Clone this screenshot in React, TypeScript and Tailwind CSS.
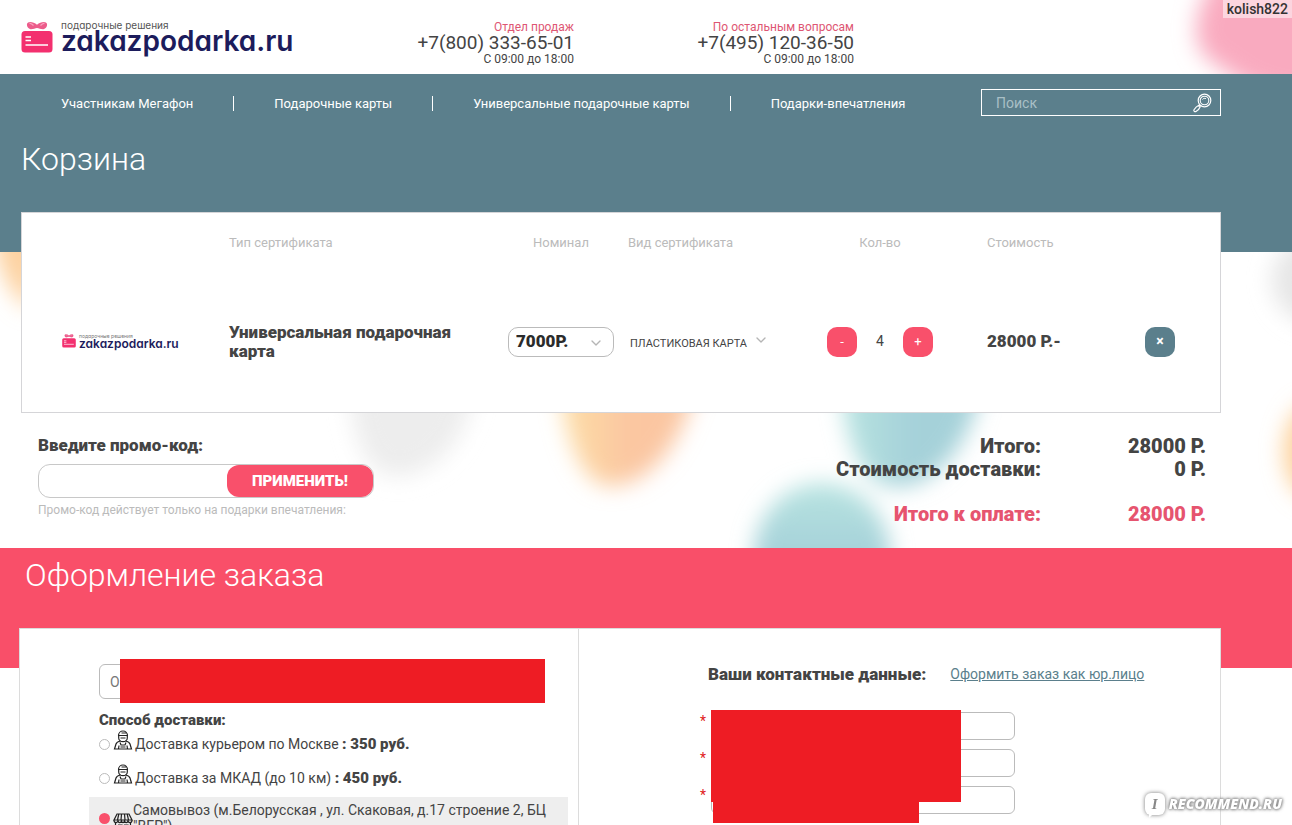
import { ChevronDown } from "lucide-react";

const menu = [
  "Участникам Мегафон",
  "Подарочные карты",
  "Универсальные подарочные карты",
  "Подарки-впечатления",
];

const phones = [
  { title: "Отдел продаж", phone: "+7(800) 333-65-01" },
  { title: "По остальным вопросам", phone: "+7(495) 120-36-50" },
];

const contactFields = ["Имя", "Телефон", "E-mail"];

function GiftIcon({ className }: { className: string }) {
  return (
    <svg viewBox="0 0 32 31" className={className} aria-hidden="true">
      <path d="M16 2.800C13 .3 8.500-.8 6.500 1 5 2.800 6.500 6.800 9.500 7.200c2.500 .2 4.500-.8 6.500-1.200 2 .4 4 1.400 6.500 1.200 3-.4 4.500-4.400 3-6.200C23.500-.8 19 .3 16 2.800Z" fill="#ec5c8b" />
      <path d="M8.500 1.200c1.500 .4 3 1.300 4 2.300M23.500 1.200c-1.500 .4-3 1.300-4 2.300" stroke="#f9a3bf" strokeWidth="1.200" fill="none" />
      <rect x="0.500" y="9" width="31" height="21.500" rx="3.500" fill="#f3306f" />
      <path d="M4.500 15h5.500M4.500 18.500h5.500M4.500 23h22.500" stroke="#fff" strokeWidth="1.600" />
    </svg>
  );
}

function CourierIcon() {
  return (
    <svg viewBox="0 0 20 20" className="h-5 w-5 shrink-0" fill="none" stroke="#222" strokeWidth="1.200" aria-hidden="true">
      <path d="M5.500 5.500a4.500 4.500 0 0 1 9 0M8.500 3h5M5 5.500h10M5.700 5.500v2.500c0 2 2 3.700 4.300 3.700s4.300-1.700 4.300-3.700V5.500M7.500 8h5" />
      <path d="M7.500 11c-2.700 .4-4 1.300-4.500 3L1.500 19h17L17 14c-.5-1.700-1.800-2.600-4.500-3" />
      <path d="M7 12.500l1 2.500h4l1-2.500M5.500 19l.5-3.500M14.500 19l-.5-3.500M7.500 17h5" />
    </svg>
  );
}

function StoreIcon() {
  return (
    <svg viewBox="0 0 20 20" className="h-5 w-5 shrink-0" fill="none" stroke="#222" strokeWidth="1.200" aria-hidden="true">
      <path d="M4 2h12l3 6H1L4 2ZM5.800 2 4.500 8M8.500 2 8 8M11.500 2l.5 6M14.200 2l1.300 6" />
      <path d="M1 8c0 3.500 4 3.500 4 0 0 3.500 3.500 3.500 3.500 0 0 3.500 3 3.500 3 0 0 3.500 3.500 3.500 3.500 0 0 3.500 4 3.500 4 0" />
      <path d="M2.500 11v8h15v-8M5 13h4v6M11.500 13H15v3h-3.500z" />
    </svg>
  );
}

function SearchIcon() {
  return (
    <svg viewBox="0 0 20 20" className="h-5 w-5" fill="none" stroke="#fff" aria-hidden="true">
      <circle cx="12.500" cy="7.500" r="6.300" strokeWidth="1.200" />
      <circle cx="12.500" cy="7.500" r="4.300" strokeWidth="1.100" />
      <path d="M10.500 6.500c.8-1.200 2.400-1.600 3.500-.8" />
      <path d="M8 12 6.500 13.500M6.800 12.300c-2 1-4 3.200-4.800 4.500-.7 1.200.8 2.400 2 1.700 1.500-.9 3.500-3 4.200-4.800z" strokeWidth="1.200" />
    </svg>
  );
}

// Soft coloured spots behind the page
function Spots() {
  return (
    <svg className="pointer-events-none absolute top-0 left-0 -z-10" width="1292" height="668" aria-hidden="true">
      <defs>
        <filter id="soft" x="-40%" y="-40%" width="180%" height="180%">
          <feGaussianBlur stdDeviation="11" />
        </filter>
        <linearGradient id="peach" x1="0" x2="0.500">
          <stop offset="0" stopColor="#fddfa6" />
          <stop offset="1" stopColor="#fbc6a1" />
        </linearGradient>
        <linearGradient id="aqua" x1="0" x2="0.500">
          <stop offset="0" stopColor="#b8e4e1" />
          <stop offset="1" stopColor="#a5d1d9" />
        </linearGradient>
        <linearGradient id="aquaDown" x1="0" y1="0" x2="0" y2="0.500">
          <stop offset="0" stopColor="#b8e4e1" />
          <stop offset="1" stopColor="#a5d1d9" />
        </linearGradient>
      </defs>
      <g filter="url(#soft)">
        <path d="M1220-30c-28 40-34 80-2 96 18 10 30 34 122 34V-30z" fill="#f9aabf" />
        <path d="M-12 200c4 50 14 90 44 110l20-110z" fill="#fdd2a0" />
        <ellipse cx="1322" cy="280" rx="50" ry="45" fill="#e6e6e6" />
        <path d="M350 380c0 56 16 96 46 96 36 0 76-36 78-96z" fill="#ededed" />
        <path d="M560 360c-2 66 20 126 50 126 38 0 80-44 90-126z" fill="url(#peach)" />
        <path d="M842 360c-4 76 20 127 54 127 40 0 84-47 88-127z" fill="url(#aqua)" />
        <ellipse cx="822" cy="556" rx="68" ry="73" fill="url(#aquaDown)" />
        <ellipse cx="1314" cy="451" rx="30" ry="48" fill="#fdd09a" />
      </g>
    </svg>
  );
}

function Header() {
  return (
    <header className="flex h-[74px] pl-[21px]">
      <a href="#" className="flex w-[273px] items-start gap-2 pt-[19px]">
        <GiftIcon className="mt-[3px] h-[31px] w-8 shrink-0" />
        <span className="flex flex-col font-['Inter',sans-serif] [font-feature-settings:'cv11']">
          <span className="text-[10px] leading-3 text-[#555]">подарочные решения</span>
          <span className="text-[28px] leading-5 font-semibold text-[#1c1c5c]">zakazpodarka.ru</span>
        </span>
      </a>
      {phones.map((item) => (
        <div key={item.phone} className="w-[280px] pt-[19px] text-right text-[12px] leading-4 text-[#444]">
          <div className="text-[#de5673]">{item.title}</div>
          <div className="text-[19px]">{item.phone}</div>
          <div>С 09:00 до 18:00</div>
        </div>
      ))}
    </header>
  );
}

function TopBand() {
  return (
    <div className="h-[178px] bg-[#5b7f8c] pt-[15px] pr-[71px] pl-[21px] text-white">
      <div className="flex items-center justify-between">
        <nav className="flex pt-0.5 text-[13px] leading-[15px]">
          {menu.map((item) => (
            <a key={item} href="#" className="border-r border-white px-10 last:border-r-0">
              {item}
            </a>
          ))}
        </nav>
        <form className="flex h-[27px] w-60 items-center border border-white pr-2 pl-[14px]">
          <input
            type="search"
            aria-label="Поиск"
            placeholder="Поиск"
            className="min-w-0 flex-1 bg-transparent text-[14px] leading-5 outline-none placeholder:text-[#a9bfc6]"
          />
          <button type="button" aria-label="Найти">
            <SearchIcon />
          </button>
        </form>
      </div>
      <h1 className="mt-[23px] text-[32px] leading-10 font-light">Корзина</h1>
    </div>
  );
}

function CartTable() {
  return (
    <section className="-mt-10 mr-[71px] ml-[21px] border border-[#d5d5d8] bg-white pb-0.5">
      <table className="w-full table-fixed text-left text-[#444]">
        <colgroup>
          <col className="w-[207px]" />
          <col className="w-[279px]" />
          <col className="w-[106px]" />
          <col className="w-[213px]" />
          <col className="w-[106px]" />
          <col className="w-[212px]" />
          <col />
        </colgroup>
        <thead>
          <tr className="h-[60px] text-[13px] text-[#bbb]">
            <td />
            <th className="font-normal">Тип сертификата</th>
            <th className="text-center font-normal">Номинал</th>
            <th className="pl-[14px] font-normal">Вид сертификата</th>
            <th className="text-center font-normal">Кол-во</th>
            <th className="pl-[54px] font-normal">Стоимость</th>
            <td />
          </tr>
        </thead>
        <tbody>
          <tr className="h-[137px]">
            <td className="pl-10">
              <div className="flex items-start gap-[3px]">
                <GiftIcon className="h-[14px] w-[14px] shrink-0" />
                <span className="flex flex-col font-['Inter',sans-serif] [font-feature-settings:'cv11']">
                  <span className="text-[5px] leading-[4px] text-[#777]">подарочные решения</span>
                  <span className="text-[12px] leading-3 font-semibold text-[#1c1c5c]">zakazpodarka.ru</span>
                </span>
              </div>
            </td>
            <td className="pr-10 text-[17px] leading-[19px] font-black">Универсальная подарочная карта</td>
            <td>
              <div className="relative">
                <select
                  aria-label="Номинал"
                  className="h-[30px] w-full appearance-none rounded-[10px] border border-[#bbb] bg-white pl-[7px] text-[17px] font-black text-[#2b2b2b]"
                >
                  <option>7000Р.</option>
                </select>
                <ChevronDown className="pointer-events-none absolute top-2 right-[10px] h-4 w-4 text-[#b5b5b5]" />
              </div>
            </td>
            <td className="pl-4">
              <div className="relative w-[139px]">
                <select aria-label="Вид сертификата" className="w-full appearance-none text-[11px] leading-5">
                  <option>ПЛАСТИКОВАЯ КАРТА</option>
                </select>
                <ChevronDown className="pointer-events-none absolute top-0.5 right-0 h-4 w-4 text-[#b5b5b5]" />
              </div>
            </td>
            <td>
              <div className="flex items-center justify-between text-[14px]">
                <button type="button" aria-label="Меньше" className="h-[30px] w-[30px] rounded-[10px] bg-[#f9506b] text-[13px] text-white">-</button>
                <span>4</span>
                <button type="button" aria-label="Больше" className="h-[30px] w-[30px] rounded-[10px] bg-[#f9506b] text-[13px] text-white">+</button>
              </div>
            </td>
            <td className="pl-[54px] text-[17px] font-black">28000 Р.-</td>
            <td>
              <button type="button" aria-label="Удалить" className="block h-[30px] w-[30px] rounded-[10px] bg-[#5b7f8c] text-[14px] font-bold text-white">×</button>
            </td>
          </tr>
        </tbody>
      </table>
    </section>
  );
}

function Summary() {
  return (
    <section className="flex h-[135px] justify-between pt-[22px] pr-[86px] pl-[38px] text-[#444]">
      <form className="w-[336px]">
        <label htmlFor="promo" className="block text-[17px] leading-5 font-black">
          Введите промо-код:
        </label>
        <div className="mt-[9px] flex h-[34px] rounded-xl border border-[#c8c8c8] bg-white">
          <input id="promo" className="min-w-0 flex-1 rounded-xl bg-transparent px-3 text-[14px] outline-none" />
          <button type="button" className="w-[146px] rounded-xl bg-[#f9506b] text-[15px] font-black text-white">
            ПРИМЕНИТЬ!
          </button>
        </div>
        <p className="mt-1 text-[12px] leading-4 text-[#bbb]">Промо-код действует только на подарки впечатления:</p>
      </form>
      <dl className="grid grid-cols-[auto_165px] content-start text-right text-[20px] leading-[23px] font-black">
        <dt>Итого:</dt>
        <dd>28000 Р.</dd>
        <dt>Стоимость доставки:</dt>
        <dd>0 Р.</dd>
        <dt className="mt-[22px] text-[#e6546f]">Итого к оплате:</dt>
        <dd className="mt-[22px] text-[#e6546f]">28000 Р.</dd>
      </dl>
    </section>
  );
}

function Delivery() {
  return (
    <fieldset className="w-[559px] border-r border-[#dcdcdc] pt-[35px] text-[14px]">
      <div className="relative ml-[79px] h-[35px] w-[430px]">
        <input aria-label="Город" defaultValue="О" className="h-full w-full rounded-md border border-[#bbb] pl-[10px] text-[14px] text-[#777]" />
        <div className="absolute -top-[5px] left-[21px] h-11 w-[425px] bg-[#ee1c24]" />
      </div>
      <legend className="contents">
        <span className="mt-[14px] ml-[79px] block text-[15px] leading-[14px] font-black">Способ доставки:</span>
      </legend>
      <label className="ml-[79px] flex h-[34px] items-center">
        <input type="radio" name="delivery" className="h-[11px] w-[11px] appearance-none rounded-full border border-[#bbb]" />
        <span className="mb-2 ml-[3px] flex"><CourierIcon /></span>
        <span className="ml-0.5">Доставка курьером по Москве <b className="text-[15px] font-black">: 350 руб.</b></span>
      </label>
      <label className="ml-[79px] flex h-[34px] items-center">
        <input type="radio" name="delivery" className="h-[11px] w-[11px] appearance-none rounded-full border border-[#bbb]" />
        <span className="mb-2 ml-[3px] flex"><CourierIcon /></span>
        <span className="ml-0.5">Доставка за МКАД (до 10 км) <b className="text-[15px] font-black">: 450 руб.</b></span>
      </label>
      <label className="mt-0.5 mr-[10px] ml-[69px] flex items-center bg-[#eee] py-[5px] pr-3 pl-[10px]">
        <input type="radio" name="delivery" defaultChecked className="h-[11px] w-[11px] shrink-0 appearance-none rounded-full bg-[#f9506b]" />
        <span className="mt-2 ml-[3px] flex"><StoreIcon /></span>
        <span className="leading-4">Самовывоз (м.Белорусская , ул. Скаковая, д.17 строение 2, БЦ "ВЕР")</span>
      </label>
    </fieldset>
  );
}

function Contacts() {
  return (
    <div className="flex-1 pt-[35px] pl-[121px]">
      <div className="flex items-center gap-6 pl-2">
        <h3 className="text-[17px] leading-5 font-black">Ваши контактные данные:</h3>
        <a href="#" className="text-[14px] leading-5 text-[#5b7f8c] underline">Оформить заказ как юр.лицо</a>
      </div>
      <div className="relative mt-7 flex w-[315px] flex-col gap-[9px]">
        {contactFields.map((name) => (
          <label key={name} className="flex h-7 items-start gap-[5px] text-[14px] leading-[18px] text-[#e02020]">
            <span className="w-[6px]">*</span>
            <input aria-label={name} className="h-full min-w-0 flex-1 rounded-md border border-[#bbb] px-2 text-[#444]" />
          </label>
        ))}
        <div className="absolute -top-[2px] left-[11px] h-[92px] w-[250px] bg-[#ee1c24]" />
        <div className="absolute top-[90px] left-[13px] h-[21px] w-[206px] bg-[#ee1c24]" />
      </div>
    </div>
  );
}

function Watermark() {
  return (
    <div className="fixed right-[10px] bottom-[10px] flex items-center gap-1 font-['Open_Sans',sans-serif] font-extrabold text-white italic">
      <span className="relative flex h-[22px] w-5 items-center justify-center rounded-md bg-white font-['Liberation_Serif',serif] text-[15px] text-[#888] shadow-[0_0_4px_#777]">
        I
        <span className="absolute -bottom-[3px] left-1 h-0 w-0 border-t-4 border-r-4 border-t-white border-r-transparent" />
      </span>
      <span className="text-[14px] leading-5 [text-shadow:0_0_3px_#888,0_0_3px_#888,0_0_4px_#999]">RECOMMEND.RU</span>
    </div>
  );
}

export default function App() {
  return (
    <div className="relative isolate min-h-screen overflow-hidden bg-white font-['Roboto',sans-serif] text-[#444]">
      <Spots />
      <Header />
      <TopBand />
      <CartTable />
      <Summary />
      <h2 className="h-[120px] bg-[#f94f69] pt-[7px] pl-[25px] text-[32px] leading-10 font-light text-white">Оформление заказа</h2>
      <form className="-mt-10 mr-[71px] ml-[19px] flex border border-[#dcdcdc] bg-white">
        <Delivery />
        <Contacts />
      </form>
      <div className="absolute top-0 right-0 bg-white/50 px-1 text-[14px] leading-[18px] font-medium text-[#333]">kolish822</div>
      <Watermark />
    </div>
  );
}
